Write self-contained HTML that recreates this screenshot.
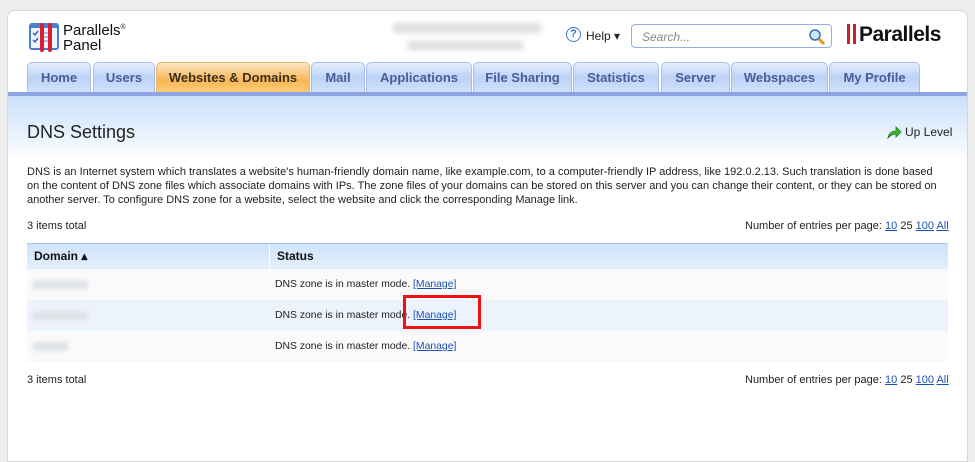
<!DOCTYPE html><html><head><style>
body{margin:0;background:#efeeee;font-family:"Liberation Sans",sans-serif;width:975px;height:447px;overflow:hidden;position:relative}
.box{position:absolute;left:7px;top:10px;width:959px;height:450px;background:#fff;border:1px solid #d6d6d6;border-radius:8px 8px 0 0;overflow:hidden}
.a{position:absolute}
.tab{position:absolute;top:51px;height:30px;border:1px solid #a9bde8;border-bottom:none;border-radius:5px 5px 0 0;background:linear-gradient(#e4eefc,#bcd3f6 50%,#cfe0fb);color:#4c5b99;font-weight:bold;font-size:13px;text-align:center;line-height:30px;box-sizing:border-box}
.tab.on{background:linear-gradient(#fde7c5,#f9b653 60%,#fccb78);color:#3a3022;border-color:#e8b46a}
.small{font-size:11px;color:#222}
a{color:#1a52b8}
.row{position:absolute;left:19px;width:921px;height:31px;font-size:10.4px;line-height:31px;color:#222}
.blur{position:absolute;left:6px;top:11px;height:9px;background:#dfe2e8;filter:blur(2px)}
</style></head><body>
<div class="box">
<svg class="a" style="left:20px;top:10px" width="34" height="32"><rect x="1" y="2" width="30" height="27" rx="3" fill="#4a7fd6"/><rect x="3" y="7" width="26" height="20" fill="#eef3fb"/><path d="M5 12l2 2 3-4M5 19l2 2 3-4" stroke="#2a66c8" stroke-width="1.5" fill="none"/><path d="M12 12h12M12 16h12M12 20h12" stroke="#5588d8"/><rect x="12" y="2" width="4" height="29" rx="2" fill="#d92030"/><rect x="20" y="2" width="4" height="29" rx="2" fill="#d92030"/></svg>
<div class="a" style="left:55px;top:9px;font-size:15px;line-height:15px;color:#111">Parallels<sup style="font-size:7px">®</sup><br>Panel</div>
<div class="a" style="left:385px;top:12px;width:148px;height:10px;background:#ddd;filter:blur(3px)"></div>
<div class="a" style="left:400px;top:30px;width:115px;height:9px;background:#ddd;filter:blur(3px)"></div>
<div class="a" style="left:558px;top:16px;width:15px;height:15px;border:1.5px solid #3a78d0;border-radius:50%;box-sizing:border-box;font-size:11px;font-weight:bold;color:#3a78d0;text-align:center;line-height:12px">?</div>
<div class="a" style="left:578px;top:18px;font-size:12px;color:#222">Help ▾</div>
<div class="a" style="left:623px;top:13px;width:201px;height:24px;border:1px solid #93aee0;border-radius:4px;box-sizing:border-box;font-size:12px;font-style:italic;color:#888;padding:5px 10px">Search...</div>
<svg class="a" style="left:800px;top:17px" width="18" height="18"><circle cx="7" cy="7" r="5" fill="#cfe6fb" stroke="#3b6fae" stroke-width="1.5"/><path d="M11 11l5 5" stroke="#d89a18" stroke-width="3"/></svg>
<div class="a" style="left:839px;top:13px;width:3px;height:20px;background:#d21e2b"></div>
<div class="a" style="left:845px;top:13px;width:3px;height:20px;background:#d21e2b"></div>
<div class="a" style="left:851px;top:12px;font-size:21px;font-weight:bold;color:#111;letter-spacing:-0.5px">Parallels</div>
<div class="tab" style="left:19px;width:64px">Home</div>
<div class="tab" style="left:85px;width:62px">Users</div>
<div class="tab on" style="left:148px;width:154px">Websites &amp; Domains</div>
<div class="tab" style="left:303px;width:54px">Mail</div>
<div class="tab" style="left:358px;width:106px">Applications</div>
<div class="tab" style="left:465px;width:99px">File Sharing</div>
<div class="tab" style="left:565px;width:86px">Statistics</div>
<div class="tab" style="left:653px;width:69px">Server</div>
<div class="tab" style="left:723px;width:97px">Webspaces</div>
<div class="tab" style="left:821px;width:91px">My Profile</div>
<div class="a" style="left:0;top:81px;width:959px;height:4px;background:#8ea4e2"></div>
<div class="a" style="left:0;top:85px;width:959px;height:65px;background:linear-gradient(#c9e0fb,#fff)"></div>
<div class="a" style="left:19px;top:111px;font-size:18px;color:#222">DNS Settings</div>
<svg class="a" style="left:878px;top:113px" width="16" height="16"><path d="M2 14c1-5 4-7 8-7V3l5 5-5 5V10c-3 0-5 1-8 4z" fill="#3cb82c" stroke="#1d7a18" stroke-width=".8"/></svg>
<div class="a" style="left:897px;top:114px;font-size:12px;color:#222">Up Level</div>
<div class="a small" style="left:19px;top:154px;width:920px;line-height:14px">DNS is an Internet system which translates a website's human-friendly domain name, like example.com, to a computer-friendly IP address, like 192.0.2.13. Such translation is done based on the content of DNS zone files which associate domains with IPs. The zone files of your domains can be stored on this server and you can change their content, or they can be stored on another server. To configure DNS zone for a website, select the website and click the corresponding Manage link.</div>
<div class="a small" style="left:19px;top:209px">3 items total</div>
<div class="a small" style="left:737px;top:209px">Number of entries per page: <a href="#">10</a> 25 <a href="#">100</a> <a href="#">All</a></div>
<div class="a" style="left:19px;top:232px;width:921px;height:25px;background:linear-gradient(#cfe3fb,#e4effc);border-top:1px solid #a9c3ef;border-bottom:1px solid #a9c3ef;font-size:12px;font-weight:bold;line-height:25px;color:#111"><span style="margin-left:7px">Domain ▴</span><span style="position:absolute;left:242px;top:0;border-left:1px solid #fff;padding-left:7px;height:25px">Status</span></div>
<div class="row" style="top:258px;background:#fafafa"><div class="blur" style="width:55px"></div><span style="position:absolute;left:248px">DNS zone is in master mode. <a href="#">[Manage]</a></span></div>
<div class="row" style="top:289px;background:#edf3fc"><div class="blur" style="width:55px"></div><span style="position:absolute;left:248px">DNS zone is in master mode. <a href="#">[Manage]</a></span></div>
<div class="row" style="top:320px;background:#fafafa"><div class="blur" style="width:35px"></div><span style="position:absolute;left:248px">DNS zone is in master mode. <a href="#">[Manage]</a></span></div>
<div class="a" style="left:395px;top:284px;width:78px;height:34px;border:3px solid #ee1111;box-sizing:border-box"></div>
<div class="a small" style="left:19px;top:363px">3 items total</div>
<div class="a small" style="left:737px;top:363px">Number of entries per page: <a href="#">10</a> 25 <a href="#">100</a> <a href="#">All</a></div>
</div>
</body></html>
